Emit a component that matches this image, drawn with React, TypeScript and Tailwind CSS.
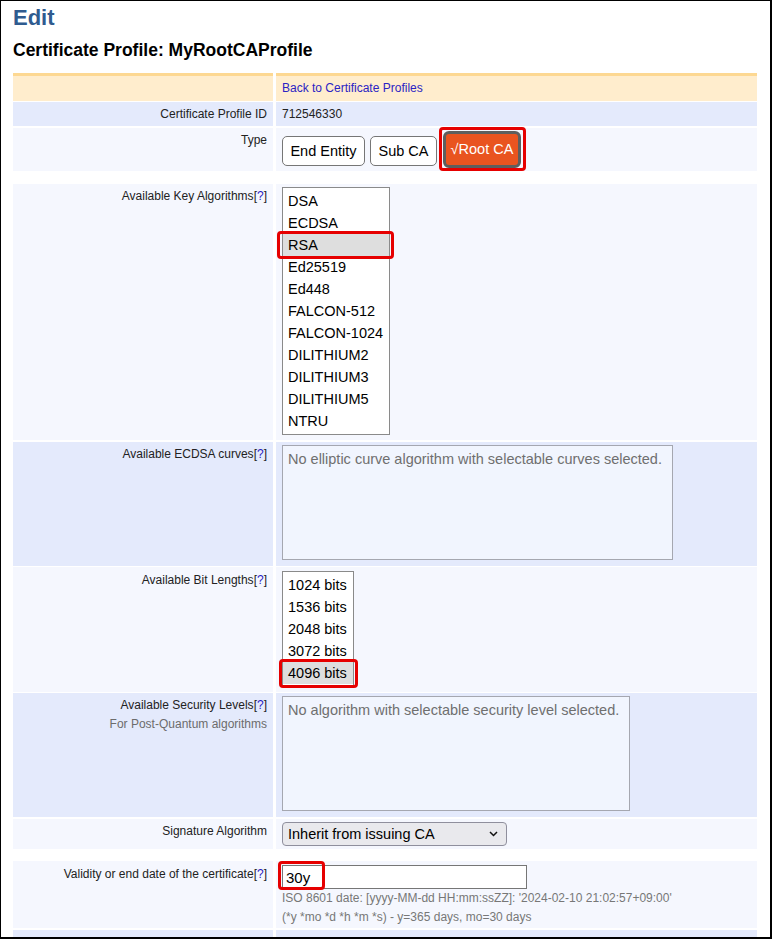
import React from "react";

const FONT = { fontFamily: '"Liberation Sans", Arial, sans-serif' };

function Help() {
  return (
    <span>
      [<span className="text-[#2b23c4]">?</span>]
    </span>
  );
}

function Row({
  bg,
  label,
  children,
  h,
  extra = "",
  pt = "pt-[3px]",
}: {
  bg: string;
  label: React.ReactNode;
  children?: React.ReactNode;
  h: string;
  extra?: string;
  pt?: string;
}) {
  return (
    <div className={`flex shrink-0 gap-[3px] ${h} ${extra}`}>
      <div
        className={`w-[260px] shrink-0 ${bg} ${pt} pr-[6px] text-right text-[12px] leading-[19px] text-[#222]`}
      >
        {label}
      </div>
      <div className={`w-[481px] shrink-0 ${bg} ${pt} pl-[6px] text-[12px] leading-[19px] text-[#222]`}>
        {children}
      </div>
    </div>
  );
}

function ListBox({ items, sel, w, h }: { items: string[]; sel: string; w: string; h: string }) {
  return (
    <div className={`${w} ${h} border border-[#8a8a8a] bg-white pt-[2px]`}>
      {items.map((it) => (
        <div
          key={it}
          className={`h-[22px] pl-[5px] text-[14.5px] leading-[22px] text-black ${
            it === sel ? "bg-[#dedede]" : ""
          }`}
        >
          {it}
        </div>
      ))}
    </div>
  );
}

const LIGHT = "bg-[#f5f7fe]";
const BLUE = "bg-[#e4eafc]";

export default function App() {
  return (
    <div className="relative h-[939px] w-[773px] overflow-hidden bg-white" style={FONT}>
      <div className="h-full w-[772px] overflow-hidden border-l border-t border-r-2 border-b-2 border-black pl-[12px]">
        <div className="mt-[6px] text-[22px] font-bold leading-[22px] text-[#2f5b8f]">Edit</div>
        <div className="mt-[12px] text-[17.5px] font-bold leading-[18px] text-black">
          Certificate Profile: MyRootCAProfile
        </div>

        <div className="mt-[14px] flex flex-col">
          {/* header */}
          <div className="flex h-[28px] gap-[3px]">
            <div className="w-[260px] shrink-0 border-t-[3px] border-[#fdd892] bg-[#ffedcd]" />
            <div className="w-[481px] shrink-0 border-t-[3px] border-[#fdd892] bg-[#ffedcd] pl-[6px] pt-[3px] text-[12px] leading-[19px] text-[#2b23c4]">
              Back to Certificate Profiles
            </div>
          </div>

          <Row bg={BLUE} h="h-[24px]" extra="mt-[1px]" label="Certificate Profile ID">
            712546330
          </Row>

          <Row bg={LIGHT} h="h-[43px]" extra="mt-[2px]" label="Type">
            <div className="flex items-start gap-[5px] text-[14.5px]">
              <div className="mt-[5px] flex h-[30px] w-[83px] items-center justify-center rounded-[5px] border border-[#767676] bg-white text-black">
                End Entity
              </div>
              <div className="mt-[5px] flex h-[30px] w-[67px] items-center justify-center rounded-[5px] border border-[#767676] bg-white text-black">
                Sub CA
              </div>
              <div className="ml-[1px] flex h-[37px] w-[78px] items-center justify-center rounded-[6px] border-[3px] border-[#5e5e5e] bg-[#e95420] text-white">
                √Root CA
              </div>
            </div>
          </Row>

          <Row
            bg={LIGHT}
            h="h-[256px]"
            extra="mt-[13px]"
            label={
              <>
                Available Key Algorithms
                <Help />
              </>
            }
          >
            <ListBox
              w="w-[108px]"
              h="h-[248px]"
              sel="RSA"
              items={[
                "DSA",
                "ECDSA",
                "RSA",
                "Ed25519",
                "Ed448",
                "FALCON-512",
                "FALCON-1024",
                "DILITHIUM2",
                "DILITHIUM3",
                "DILITHIUM5",
                "NTRU",
              ]}
            />
          </Row>

          <Row
            bg={BLUE}
            h="h-[124px]"
            extra="mt-[2px]"
            label={
              <>
                Available ECDSA curves
                <Help />
              </>
            }
          >
            <div className="h-[115px] w-[391px] border border-[#a5a7b0] bg-[#f1f5fe] px-[5px] pt-[5px] text-[14.5px] leading-[17px] text-[#6f6f6f]">
              No elliptic curve algorithm with selectable curves selected.
            </div>
          </Row>

          <Row
            bg={LIGHT}
            h="h-[125px]"
            extra="mt-[1px]"
            pt="pt-[4px]"
            label={
              <>
                Available Bit Lengths
                <Help />
              </>
            }
          >
            <ListBox
              w="w-[72px]"
              h="h-[116px]"
              sel="4096 bits"
              items={["1024 bits", "1536 bits", "2048 bits", "3072 bits", "4096 bits"]}
            />
          </Row>

          <Row
            bg={BLUE}
            h="h-[124px]"
            extra="mt-[1px]"
            label={
              <>
                <div>
                  Available Security Levels
                  <Help />
                </div>
                <div className="text-[#6c6c6c]">For Post-Quantum algorithms</div>
              </>
            }
          >
            <div className="h-[115px] w-[348px] border border-[#a5a7b0] bg-[#f1f5fe] px-[5px] pt-[5px] text-[14.5px] leading-[17px] text-[#6f6f6f]">
              No algorithm with selectable security level selected.
            </div>
          </Row>

          <Row bg={LIGHT} h="h-[30px]" extra="mt-[2px]" label="Signature Algorithm">
            <div className="flex h-[24px] w-[225px] items-center justify-between rounded-[4px] border border-[#8f8f9d] bg-[#e9e9ed] pl-[5px] pr-[8px] text-[14.5px] text-black">
              <span>Inherit from issuing CA</span>
              <svg width="9" height="6" viewBox="0 0 9 6" fill="none">
                <path d="M1 1l3.5 3.5L8 1" stroke="#111" strokeWidth="1.5" />
              </svg>
            </div>
          </Row>

          <Row
            bg={LIGHT}
            h="h-[67px]"
            extra="mt-[12px]"
            pt="pt-[4px]"
            label={
              <>
                Validity or end date of the certificate
                <Help />
              </>
            }
          >
            <div className="flex h-[24px] w-[245px] items-center border border-[#767676] bg-white pl-[3px] text-[15px] text-black">
              30y
            </div>
            <div className="text-[#777]">
              ISO 8601 date: [yyyy-MM-dd HH:mm:ssZZ]: '2024-02-10 21:02:57+09:00'
            </div>
            <div className="text-[#777]">(*y *mo *d *h *m *s) - y=365 days, mo=30 days</div>
          </Row>

          <Row bg={BLUE} h="h-[20px]" extra="mt-[2px]" label="" />
        </div>
      </div>

      {/* red annotations */}
      <div className="pointer-events-none absolute left-[439px] top-[127px] h-[44px] w-[87px] rounded-[4px] border-[3px] border-[#e60000]" />
      <div className="pointer-events-none absolute left-[277px] top-[231px] h-[28px] w-[117px] rounded-[4px] border-[3px] border-[#e60000]" />
      <div className="pointer-events-none absolute left-[279px] top-[659px] h-[29px] w-[79px] rounded-[4px] border-[3px] border-[#e60000]" />
      <div className="pointer-events-none absolute left-[278px] top-[861px] h-[29px] w-[47px] rounded-[4px] border-[3px] border-[#e60000]" />
    </div>
  );
}
